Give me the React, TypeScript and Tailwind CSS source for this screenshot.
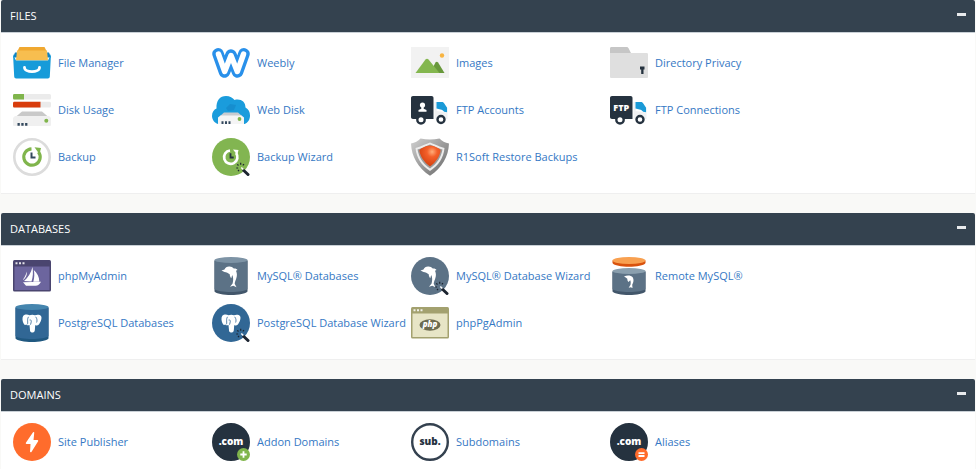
import { useState } from 'react'
import type { ReactNode } from 'react'

const Svg = ({ children }: { children: ReactNode }) => (
  <svg viewBox="0 0 38 38" className="size-[38px] shrink-0" aria-hidden="true">{children}</svg>
)

// Shared glyphs
const Dolphin = () => (
  <path fill="#fff" d="M9.500 13.500l3-1c.8-2 2.700-3.200 5-3 1.800.1 3.200.8 4.300 2 1.500-.3 2.800.2 3.700 1.400l-1.500.8c1.200 2.500 1.200 5.300.1 8.300-.7 1.800-1.300 3.200-1.400 4.700l1.800 3.500-3.200-1.500-3.300 1 2.600-3.300c.9-3.200.8-6-.4-8.400l-.9 3.200c-.9-1-1.500-2.300-1.600-4-1.500-1.200-3.200-1.900-5.200-2.200z" />
)

const Elephant = ({ line }: { line: string }) => (
  <>
    <path fill="#fff" d="M10.300 11.800c1.500-1.600 4.300-1.400 6.200-.6 1.900-.7 3.800-.7 5.500.1 2.200-.9 5-.7 6.100.9 1.200 2-.6 6.300-2.500 8.600-1 .8-2.400.8-3.300.1-.4 2.300-.2 4.700-.7 6.400-.9 1.800-4 1.700-4.500-.2-.4-2-.2-4.200-.6-6.200-1.500.8-2.500.5-3.300-.5-.7.700-1.600.7-2.300-.4-1.500-2.300-2-6.200-.6-8.200z" />
    <path fill="none" stroke={line} strokeWidth=".8" d="M15.500 12.800c-1.200 2-.9 3.700-.8 5.200.1 1 0 1.600-.4 2.300M22.700 12.800c1.500 2 1.600 4 .9 5.700M16.600 16c1-.3 1.700.2 1.700 1.200 0 1.200-.5 2.300-.8 3.500" />
  </>
)

const Wand = () => (
  <>
    <path stroke="#1c2430" strokeWidth="3" strokeLinecap="round" d="M31.800 32.500l4.200 4" />
    <path stroke="#fff" strokeWidth="1.500" d="M29.300 29.500l2 2" />
    <path stroke="#1c2430" strokeWidth="1.200" d="M28.700 24.800v2M25.300 26.300l1.200 1.200M32 26.200l-1.200 1.200M24.300 30h1.800M26 33.200l1-1.200" />
  </>
)

const Cylinder = ({ top, body, base, y = 0 }: { top: string; body: string; base: string; y?: number }) => (
  <>
    <path fill={base} d={`M2.500 ${y + 4}V34.500c3 4.600 30 4.600 33 0V${y + 4}z`} />
    <path fill={body} d={`M2.500 ${y + 3}V32c3 4 30 4 33 0V${y + 3}z`} />
    <ellipse cx="19" cy={y + 3} rx="16.500" ry="3" fill={top} />
  </>
)

const Browser = ({ bar, body, children }: { bar: string; body: string; children: ReactNode }) => (
  <Svg>
    <rect y="3" width="38" height="31.500" rx="1.500" fill={bar} />
    <rect x="1.500" y="9.500" width="35" height="23.500" fill={body} />
    <path fill="#fff" opacity=".85" d="M2.500 5.300h2v2h-2zM6 5.300h2v2H6zM9.500 5.300h2v2h-2z" />
    {children}
  </Svg>
)

const Truck = ({ children }: { children: ReactNode }) => (
  <Svg>
    <path fill="#25323f" d="M0 7c0-1.200.8-2 2-2h18.500c1.200 0 2 .8 2 2v21H2c-1.200 0-2-.8-2-2z" />
    <path fill="#f0f1f2" d="M23.500 11h2.200v9l10.800 1.500V28h-13z" />
    <path fill="#1a9ad7" d="M25.500 11h5.300c1.100 0 1.700.3 2.300 1.200l3 4.600v4.400l-3-.4c-.9-1.300-2-2.300-3.600-2.300l-4-.9z" />
    <circle cx="10" cy="28.800" r="3.700" fill="#fff" stroke="#25323f" strokeWidth="2.400" />
    <circle cx="30" cy="28.500" r="3.500" fill="#fff" stroke="#25323f" strokeWidth="2.400" />
    {children}
  </Svg>
)

const Dot = ({ fill, ring, text, color }: { fill: string; ring: string; text: string; color: string }) => (
  <>
    <circle cx="19" cy="19" r="17.800" fill={fill} stroke={ring} strokeWidth="2.400" />
    <text x="19" y="22" textAnchor="middle" fill={color} className="font-['Open_Sans'] text-[10px] font-extrabold">{text}</text>
  </>
)

const Icons = {
  FileManager: () => (
    <Svg>
      <path fill="#0e83c4" d="M2 8.500h34l2 5H0z" />
      <path fill="#f0a830" d="M6.500 3h25l2.500 5v6H4V8z" />
      <path fill="#f7be4f" d="M4 6.500h30l1 10H3z" />
      <path fill="#179bd9" d="M0 10l3 6.500h32l3-6.500-1.200 22.500c-.1 1.300-.8 2-2 2H3.200c-1.200 0-1.900-.7-2-2z" />
      <path fill="none" stroke="#fff" strokeWidth="2.800" strokeLinecap="round" d="M11.500 23.500c0 5.500 15 5.500 15 0" />
    </Svg>
  ),
  Weebly: () => (
    <Svg>
      <path fill="none" stroke="#2990ea" strokeWidth="11.500" strokeLinecap="round" strokeLinejoin="round" d="M6 9.800l6.500 18.200L19 11l6.500 17L32 9.800" />
      <path fill="none" stroke="#fff" strokeWidth="5.500" strokeLinecap="round" strokeLinejoin="round" d="M6.500 10.200l6.200 17.300L19 11.500l6.300 16L31.500 10.200" />
    </Svg>
  ),
  Images: () => (
    <Svg>
      <rect y="3" width="38" height="31" fill="#f2f2f2" />
      <path fill="#68983b" d="M19 29l5.500-10.500c.8-.9 1.800-.9 2.600 0L33.500 29z" />
      <path fill="#84b74f" d="M4.500 29l10-13.500c.9-.9 2.100-.9 3 0L28.500 29z" />
      <circle cx="31" cy="11.500" r="2.200" fill="#f8b441" />
    </Svg>
  ),
  Directory: () => (
    <Svg>
      <path fill="#c6c6c6" d="M0 4.500C0 3.500.6 3 1.500 3h15c1 0 1.500.4 2 1.200L21.500 10H0z" />
      <path fill="#dfdfdf" d="M0 9h36.500c1 0 1.500.5 1.500 1.500v22c0 1-.5 1.500-1.500 1.500h-35C.5 34 0 33.500 0 32.500z" />
      <path fill="#25323f" d="M30 22.500h4.500v3h-1V30h-2.300v-4.500H30z" />
    </Svg>
  ),
  DiskUsage: () => (
    <Svg>
      <rect y="3" width="38" height="5.500" rx="1.500" fill="#ebebeb" />
      <path fill="#80b54c" d="M1.500 3H11v5.500H1.500C.5 8.500 0 8 0 7V4.500C0 3.500.5 3 1.500 3z" />
      <rect y="10.700" width="38" height="5.800" rx="1.500" fill="#ebebeb" />
      <path fill="#d83c0c" d="M1.500 10.700h26v5.800h-26c-1 0-1.500-.5-1.500-1.500v-2.800c0-1 .5-1.500 1.500-1.500z" />
      <path fill="#c9c9c9" d="M9 20.500h20l7 6H2z" />
      <path fill="#f0f0f0" d="M2 25h34l2 2v6.500c0 1-.5 1.500-1.500 1.500h-35C.5 35 0 34.500 0 33.500V27z" />
      <path fill="#34495e" d="M4.500 32h2.300v2.800H4.500zM8.300 32h2.300v2.800H8.300zM12.100 32h2.300v2.800h-2.300z" />
      <circle cx="33.300" cy="29.800" r="2" fill="#80b54c" />
    </Svg>
  ),
  WebDisk: () => (
    <Svg>
      <path fill="#1a9cdc" d="M6 33C2.500 32 0 28.500 0 25c0-4 2-6.500 4.500-7.500C4 9.500 8 5 14 5c4 0 6.800 1.700 8.500 4 6-1.600 11 1.500 11 7.500 3 1.500 4.500 4.500 4.500 8 0 4-2 7.300-5.500 8.500z" />
      <path fill="#1486c6" d="M14 17l4-4 6 1-2 5-6 1z" opacity=".6" />
      <path fill="#c9ccd0" d="M12 21.500h14l4.500 4h-23z" />
      <path fill="#f5f5f5" d="M8.500 24.500h21l2.500 2V33H6v-6.500z" />
      <path fill="#34495e" d="M9.500 30.200h2V33h-2zM13 30.200h2V33h-2zM16.500 30.200h2V33h-2z" />
      <circle cx="27.500" cy="28" r="1.900" fill="#80b54c" />
    </Svg>
  ),
  FtpAccounts: () => (
    <Truck>
      <circle cx="11.500" cy="14" r="2.600" fill="#fff" />
      <path fill="#fff" d="M10.300 15h2.400v2.700l2.800 1.300v1.700h-8V19l2.800-1.300z" />
    </Truck>
  ),
  FtpConnections: () => (
    <Truck>
      <text x="11.300" y="20" textAnchor="middle" fill="#fff" className="font-['Open_Sans'] text-[9px] font-extrabold">FTP</text>
    </Truck>
  ),
  Backup: () => (
    <Svg>
      <circle cx="19" cy="19" r="17.700" fill="#fff" stroke="#dcdcdc" strokeWidth="2.600" />
      <path fill="none" stroke="#80b54c" strokeWidth="3.200" d="M18.500 10.800A8.200 8.200 0 1 0 25.500 14" />
      <path fill="#80b54c" d="M21.500 9.300l6.500.7-1.500 6.200z" />
      <path fill="none" stroke="#34495e" strokeWidth="2" d="M18.500 14.500v5h4" />
    </Svg>
  ),
  BackupWizard: () => (
    <Svg>
      <circle cx="19" cy="19" r="19" fill="#82b551" />
      <path fill="none" stroke="#fff" strokeWidth="2.700" d="M18 12.500A6.700 6.700 0 1 0 24 15" />
      <path fill="#fff" d="M21 11.500l5.500.5-1.200 5z" />
      <path fill="none" stroke="#25323f" strokeWidth="1.800" d="M18.500 15.300v4.200h3.200" />
      <Wand />
    </Svg>
  ),
  Shield: () => (
    <Svg>
      <defs>
        <linearGradient id="steel" x1="0" y1="0" x2="1" y2="1">
          <stop offset="0" stopColor="#d0d0d0" />
          <stop offset=".5" stopColor="#9c9c9c" />
          <stop offset="1" stopColor="#666" />
        </linearGradient>
        <radialGradient id="ember" cx=".6" cy=".3" r=".7">
          <stop offset="0" stopColor="#ffad7a" />
          <stop offset=".35" stopColor="#f4602a" />
          <stop offset="1" stopColor="#d2400f" />
        </radialGradient>
      </defs>
      <path fill="url(#steel)" d="M0 5.500C4 5 7 3 9.500.5c6.500 1.200 12.500 1.200 19 0C31 3 34 5 38 5.500c-.5 13-7 24.500-19 32.200C7 30 .5 18.500 0 5.500z" />
      <path fill="#ececec" d="M4.500 10c4.500-1 8-3 14.500-5.500C25.500 7 29 9 33.500 10c-1 10-6 17.500-14.500 23C10.500 27.500 5.500 20 4.500 10z" />
      <path fill="#9a9a9a" d="M6.500 11.500C11 10.500 14 8.500 19 6.500c5 2 8 4 12.500 5C30 19 26.500 25.500 19 30.500 11.500 25.500 8 19 6.500 11.500z" />
      <path fill="url(#ember)" d="M8.500 12.500c0-1.500 6-5 10.500-5s10.500 3.500 10.500 5c0 4.500-4.500 12-10.500 16-6-4-10.500-11.500-10.500-16z" />
    </Svg>
  ),
  PhpMyAdmin: () => (
    <Browser bar="#4a456f" body="#6c659e">
      <path fill="#fff" d="M19.500 10c.8 5 .5 10-1 14.500l-7.500-.5c4-3.500 7-8 8.500-14zM20.800 13c3.500 3 5.500 7 5.500 11.500l-6 .2c1.200-4 1.300-7.700.5-11.700zM13.800 14.500c.5 3-.8 6-3.300 8.300l-.5-.3c1.800-2.200 3-4.900 3.800-8zM10 25.200l18-.5c-1.500 2.500-3 3.800-5.500 4.100H13z" />
    </Browser>
  ),
  MySql: () => <Svg><Cylinder top="#7d93a5" body="#5c7286" base="#42566a" /><Dolphin /></Svg>,
  MySqlWizard: () => <Svg><circle cx="19" cy="19" r="19" fill="#5c7286" /><Dolphin /><Wand /></Svg>,
  RemoteMySql: () => (
    <Svg>
      <path fill="#d9520d" d="M2.500 3.500V6c3 5 30 5 33 0V3.500z" />
      <ellipse cx="19" cy="3.500" rx="16.500" ry="3.500" fill="#f8a050" />
      <Cylinder top="#8a9fae" body="#5c7286" base="#42566a" y={11} />
      <path fill="#fff" d="M14 19.500c3-1.500 7-1.200 8.700.7 1.300 2.500 1 4.800-.5 7.500l.3 3.300-1.800-.8-2 .5 1.800-3c.4-2 .3-3.400-.3-4.500l-1.700 1.700c-1-1-1.200-2-1.200-3.200-1-.8-2.100-1.400-3.300-2.200z" />
    </Svg>
  ),
  Postgres: () => <Svg><Cylinder top="#4585ae" body="#316795" base="#205880" /><Elephant line="#316795" /></Svg>,
  PostgresWizard: () => <Svg><circle cx="19" cy="19" r="19" fill="#316795" /><Elephant line="#316795" /><Wand /></Svg>,
  PhpPgAdmin: () => (
    <Browser bar="#a3a16f" body="#e7e5c6">
      <ellipse cx="19" cy="21" rx="10.500" ry="5.700" fill="#6d6b50" />
      <text x="19" y="23" textAnchor="middle" fill="#fff" className="font-['Open_Sans'] text-[8px] font-extrabold italic">php</text>
    </Browser>
  ),
  Publisher: () => (
    <Svg>
      <circle cx="19" cy="19" r="19" fill="#ff6c2c" />
      <path fill="#fff" stroke="#fff" strokeWidth="1.500" strokeLinejoin="round" d="M20.500 9.800l-7 10.400h4.800l-.5 8.300 6.700-10.700h-4.800z" />
    </Svg>
  ),
  Addon: () => (
    <Svg>
      <Dot fill="#25323f" ring="#25323f" text=".com" color="#fff" />
      <circle cx="31.500" cy="31.500" r="6.500" fill="#80b54c" />
      <path stroke="#fff" strokeWidth="1.800" d="M31.500 28.300v6.400M28.300 31.500h6.400" />
    </Svg>
  ),
  Subdomain: () => <Svg><Dot fill="#fff" ring="#34414f" text="sub." color="#25323f" /></Svg>,
  Alias: () => (
    <Svg>
      <Dot fill="#25323f" ring="#25323f" text=".com" color="#fff" />
      <circle cx="31.500" cy="31.500" r="6.500" fill="#ff6c2c" />
      <path stroke="#fff" strokeWidth="1.800" d="M28.500 30.200h6M28.500 33h6" />
    </Svg>
  ),
}

const SECTIONS = [
  {
    id: 'files',
    title: 'FILES',
    items: [
      { name: 'File Manager', icon: Icons.FileManager },
      { name: 'Weebly', icon: Icons.Weebly },
      { name: 'Images', icon: Icons.Images },
      { name: 'Directory Privacy', icon: Icons.Directory },
      { name: 'Disk Usage', icon: Icons.DiskUsage },
      { name: 'Web Disk', icon: Icons.WebDisk },
      { name: 'FTP Accounts', icon: Icons.FtpAccounts },
      { name: 'FTP Connections', icon: Icons.FtpConnections },
      { name: 'Backup', icon: Icons.Backup },
      { name: 'Backup Wizard', icon: Icons.BackupWizard },
      { name: 'R1Soft Restore Backups', icon: Icons.Shield },
    ],
  },
  {
    id: 'databases',
    title: 'DATABASES',
    items: [
      { name: 'phpMyAdmin', icon: Icons.PhpMyAdmin },
      { name: 'MySQL® Databases', icon: Icons.MySql },
      { name: 'MySQL® Database Wizard', icon: Icons.MySqlWizard },
      { name: 'Remote MySQL®', icon: Icons.RemoteMySql },
      { name: 'PostgreSQL Databases', icon: Icons.Postgres },
      { name: 'PostgreSQL Database Wizard', icon: Icons.PostgresWizard },
      { name: 'phpPgAdmin', icon: Icons.PhpPgAdmin },
    ],
  },
  {
    id: 'domains',
    title: 'DOMAINS',
    items: [
      { name: 'Site Publisher', icon: Icons.Publisher },
      { name: 'Addon Domains', icon: Icons.Addon },
      { name: 'Subdomains', icon: Icons.Subdomain },
      { name: 'Aliases', icon: Icons.Alias },
    ],
  },
]

function App() {
  const [closed, setClosed] = useState<string[]>([])

  const toggle = (id: string) => {
    setClosed(c => (c.includes(id) ? c.filter(x => x !== id) : [...c, id]))
  }

  return (
    <main className="flex flex-col gap-[19px] bg-[#f9f9f7] px-px font-['Open_Sans',sans-serif] text-[11px] leading-4 font-medium">
      {SECTIONS.map(section => (
        <section key={section.id} className="group rounded-t-xs border-b border-[#efefef] bg-white last:border-b-0">
          <header className="flex h-[33px] items-center justify-between rounded-t-xs border-b border-[#c9d0d6] bg-[#34424f] pr-[9px] pl-[9px] text-white">
            <h2>{section.title}</h2>
            <button onClick={() => toggle(section.id)} aria-label={`Toggle ${section.title}`} className="flex h-5 items-start pt-[7px]">
              <span className="h-[3px] w-[9px] bg-[#e8eaec]" />
            </button>
          </header>
          {!closed.includes(section.id) && (
            <div className="grid grid-cols-[repeat(auto-fill,199px)] gap-y-[9px] px-3 pt-[11px] pb-[17px] group-last:pb-2">
              {section.items.map(item => (
                <a key={item.name} href="#" className="flex items-center gap-[7px] whitespace-nowrap text-[#3578c4] hover:underline">
                  <item.icon />
                  {item.name}
                </a>
              ))}
            </div>
          )}
        </section>
      ))}
    </main>
  )
}

export default App
